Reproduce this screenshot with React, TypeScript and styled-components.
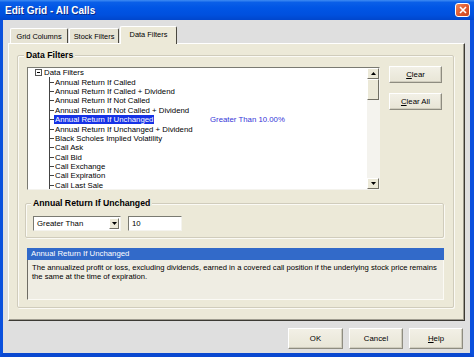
import React from 'react';
import styled, { createGlobalStyle } from 'styled-components';

const GlobalStyle = createGlobalStyle`
  html, body {
    margin: 0;
    padding: 0;
  }
  body {
    width: 474px;
    height: 357px;
    overflow: hidden;
    background: #0046d5;
    font-family: "Liberation Sans", Arial, sans-serif;
    font-size: 7.8px;
    color: #000;
  }
  * { box-sizing: border-box; }
`;

const Window = styled.div`
  width: 474px;
  height: 357px;
  display: flex;
  flex-direction: column;
`;

const TitleBar = styled.div`
  height: 20px;
  flex: none;
  display: flex;
  align-items: center;
  justify-content: space-between;
  padding: 0 4px 0 5px;
  background: linear-gradient(#3f8cf3 0%, #0a5fe8 12%, #0055e5 40%, #0050de 75%, #0046cc 100%);
`;

const Title = styled.div`
  color: #fff;
  font-weight: bold;
  font-size: 10px;
  text-shadow: 1px 1px #0a2a8a;
`;

const CloseButton = styled.div`
  width: 15px;
  height: 14px;
  border: 1px solid #fff;
  border-radius: 3px;
  background: linear-gradient(135deg, #f08a5e 0%, #e05a30 50%, #c8441c 100%);
  display: flex;
  align-items: center;
  justify-content: center;
`;

const Body = styled.div`
  flex: 1;
  display: flex;
  flex-direction: column;
  background: #dfdfdf;
  border-left: 3px solid #0a50dd;
  border-right: 4px solid #0a50dd;
  border-bottom: 4px solid #0a48d0;
  padding: 0 5px;
`;

const TabRow = styled.div`
  display: flex;
  align-items: flex-end;
  height: 23px;
  padding: 6px 0 0 2px;
`;

const Tab = styled.div<{ $w: number; $active?: boolean }>`
  position: relative;
  z-index: ${p => (p.$active ? 1 : 0)};
  width: ${p => p.$w}px;
  height: ${p => (p.$active ? 18 : 15)}px;
  margin-bottom: ${p => (p.$active ? -1 : 0)}px;
  margin-right: ${p => (p.$active ? 0 : 1)}px;
  display: flex;
  align-items: center;
  justify-content: center;
  white-space: nowrap;
  padding-bottom: ${p => (p.$active ? 2 : 0)}px;
  background: ${p => (p.$active ? '#ece9d8' : '#e6e3d4')};
  border-top: 1px solid #fff;
  border-left: 1px solid #fff;
  border-right: 1px solid #4a4840;
  border-radius: 2px 2px 0 0;
  font-size: 7.4px;
`;

const Panel = styled.div`
  height: 278px;
  flex: none;
  display: flex;
  flex-direction: column;
  background: #ece9d8;
  border-top: 1px solid #fff;
  border-left: 1px solid #fff;
  border-right: 1px solid #3c3a34;
  border-bottom: 1px solid #3c3a34;
  box-shadow: inset -1px -1px #a09d90;
`;

const GroupBox = styled.div<{ $ml: number; $mt: number; $mr: number; $pl: number; $pr: number; $pb: number }>`
  margin: ${p => p.$mt}px ${p => p.$mr}px 0 ${p => p.$ml}px;
  padding: 0 ${p => p.$pr}px ${p => p.$pb}px ${p => p.$pl}px;
  border: 1px solid #d0ccbc;
  box-shadow: inset 1px 1px #fbfaf5, 1px 1px #fbfaf5;
  border-radius: 2px;
  display: flex;
  flex-direction: column;
`;

const GroupTitle = styled.div<{ $ml: number }>`
  width: fit-content;
  height: 11px;
  line-height: 11px;
  margin: -6px 0 0 ${p => p.$ml}px;
  padding: 0 2px;
  background: #ece9d8;
  font-weight: bold;
  font-size: 8.7px;
`;

const FilterRow = styled.div`
  display: flex;
  gap: 9px;
  margin-top: 6px;
`;

const TreeBox = styled.div`
  width: 353px;
  height: 123px;
  display: flex;
  background: #fff;
  border-top: 1px solid #7a7a72;
  border-left: 1px solid #7a7a72;
  border-right: 1px solid #f4f3ee;
  border-bottom: 1px solid #f4f3ee;
  overflow: hidden;
`;

const TreeContent = styled.div`
  flex: 1;
  overflow: hidden;
  display: flex;
  flex-direction: column;
`;

const TreeRoot = styled.div`
  height: 9.4px;
  flex: none;
  display: flex;
  align-items: center;
  padding-left: 7px;
`;

const Expander = styled.span`
  width: 7px;
  height: 7px;
  border: 1px solid #555;
  margin-right: 2px;
  position: relative;
  &::after {
    content: '';
    position: absolute;
    left: 1px;
    right: 1px;
    top: 2px;
    height: 1px;
    background: #000;
  }
`;

const TreeItem = styled.div`
  height: 9.4px;
  flex: none;
  display: grid;
  grid-template-columns: 182px 1fr;
  align-items: stretch;
`;

const TreeTail = styled.div`
  flex: 1;
  margin-left: 21px;
  border-left: 1px solid #444;
`;

const ItemCell = styled.div`
  display: flex;
  align-items: stretch;
  padding-left: 21px;
`;

const Connector = styled.span`
  width: 5px;
  flex: none;
  border-left: 1px solid #444;
  background: linear-gradient(#444, #444) left center / 100% 1px no-repeat;
`;

const ItemLabel = styled.span<{ $selected?: boolean }>`
  display: flex;
  align-items: center;
  padding: 0 1px;
  white-space: nowrap;
  background: ${p => (p.$selected ? '#1632e6' : 'transparent')};
  color: ${p => (p.$selected ? '#fff' : '#000')};
`;

const FilterValue = styled.span`
  display: flex;
  align-items: center;
  color: #3535d8;
  white-space: nowrap;
`;

const ScrollBar = styled.div`
  width: 12px;
  flex: none;
  display: flex;
  flex-direction: column;
  background: #f4f3ee;
`;

const ScrollButton = styled.div<{ $h: number }>`
  height: ${p => p.$h}px;
  flex: none;
  background: #ece9d8;
  border-top: 1px solid #fff;
  border-left: 1px solid #fff;
  border-right: 1px solid #716f64;
  border-bottom: 1px solid #716f64;
  display: flex;
  align-items: center;
  justify-content: center;
`;

const ScrollTrack = styled.div`
  flex: 1;
`;

const ButtonColumn = styled.div`
  display: flex;
  flex-direction: column;
  gap: 10px;
  margin-top: -1px;
`;

const Button = styled.button<{ $w: number; $h: number }>`
  width: ${p => p.$w}px;
  height: ${p => p.$h}px;
  padding: 0;
  font-family: inherit;
  font-size: 7.8px;
  color: #000;
  background: linear-gradient(#f2f0e6, #e8e5d6);
  border-top: 1px solid #fff;
  border-left: 1px solid #fff;
  border-right: 1px solid #8e8c80;
  border-bottom: 1px solid #8e8c80;
  box-shadow: inset -1px -1px #cfccbd;
`;

const EditRow = styled.div`
  display: flex;
  gap: 7px;
  margin-top: 7px;
`;

const Combo = styled.div`
  width: 88px;
  height: 15px;
  display: flex;
  align-items: center;
  background: #fff;
  border-top: 1px solid #7a7a72;
  border-left: 1px solid #7a7a72;
  border-right: 1px solid #f4f3ee;
  border-bottom: 1px solid #f4f3ee;
  padding: 1px;
`;

const ComboText = styled.span`
  flex: 1;
  padding-left: 2px;
`;

const ComboArrow = styled.div`
  width: 10px;
  height: 11px;
  background: #ece9d8;
  border-top: 1px solid #fff;
  border-left: 1px solid #fff;
  border-right: 1px solid #716f64;
  border-bottom: 1px solid #716f64;
  display: flex;
  align-items: center;
  justify-content: center;
`;

const TextBox = styled.div`
  width: 54px;
  height: 15px;
  display: flex;
  align-items: center;
  padding-left: 3px;
  background: #fff;
  border-top: 1px solid #7a7a72;
  border-left: 1px solid #7a7a72;
  border-right: 1px solid #f4f3ee;
  border-bottom: 1px solid #f4f3ee;
`;

const Description = styled.div`
  margin-top: 10px;
  height: 52px;
  display: flex;
  flex-direction: column;
`;

const DescHeader = styled.div`
  height: 12px;
  line-height: 12px;
  padding-left: 4px;
  background: #326ac9;
  color: #fff;
`;

const DescBody = styled.div`
  flex: 1;
  padding: 4px 0 0 4px;
  line-height: 8.8px;
  font-size: 7.65px;
  white-space: nowrap;
  overflow: hidden;
  background: #efede3;
  border-left: 1px solid #6e6c64;
  border-bottom: 1px solid #fbfaf5;
  border-right: 1px solid #fbfaf5;
`;

const Footer = styled.div`
  display: flex;
  justify-content: flex-end;
  gap: 6px;
  margin: 7px 2px 0 0;
`;

const Arrow = ({ up }: { up?: boolean }) => (
  <svg width="5" height="3" viewBox="0 0 5 3">
    <path d={up ? 'M2.5 0 L5 3 L0 3 Z' : 'M0 0 L5 0 L2.5 3 Z'} fill="#000" />
  </svg>
);

const items = [
  'Annual Return If Called',
  'Annual Return If Called + Dividend',
  'Annual Return If Not Called',
  'Annual Return If Not Called + Dividend',
  'Annual Return If Unchanged',
  'Annual Return If Unchanged + Dividend',
  'Black Scholes Implied Volatility',
  'Call Ask',
  'Call Bid',
  'Call Exchange',
  'Call Expiration',
  'Call Last Sale',
];

export default function App() {
  return (
    <>
      <GlobalStyle />
      <Window>
        <TitleBar>
          <Title>Edit Grid - All Calls</Title>
          <CloseButton>
            <svg width="8" height="8" viewBox="0 0 8 8">
              <path d="M1 1 L7 7 M7 1 L1 7" stroke="#fff" strokeWidth="1.6" />
            </svg>
          </CloseButton>
        </TitleBar>
        <Body>
          <TabRow>
            <Tab $w={58}>Grid Columns</Tab>
            <Tab $w={50}>Stock Filters</Tab>
            <Tab $w={57} $active>Data Filters</Tab>
          </TabRow>
          <Panel>
            <GroupBox $ml={8} $mt={11} $mr={10} $pl={9} $pr={9} $pb={7}>
              <GroupTitle $ml={-3}>Data Filters</GroupTitle>
              <FilterRow>
                <TreeBox>
                  <TreeContent>
                    <TreeRoot>
                      <Expander />
                      Data Filters
                    </TreeRoot>
                    {items.map(name => (
                      <TreeItem key={name}>
                        <ItemCell>
                          <Connector />
                          <ItemLabel $selected={name === 'Annual Return If Unchanged'}>{name}</ItemLabel>
                        </ItemCell>
                        {name === 'Annual Return If Unchanged' && <FilterValue>Greater Than 10.00%</FilterValue>}
                      </TreeItem>
                    ))}
                    <TreeTail />
                  </TreeContent>
                  <ScrollBar>
                    <ScrollButton $h={11}>
                      <Arrow up />
                    </ScrollButton>
                    <ScrollButton $h={21} />
                    <ScrollTrack />
                    <ScrollButton $h={11}>
                      <Arrow />
                    </ScrollButton>
                  </ScrollBar>
                </TreeBox>
                <ButtonColumn>
                  <Button $w={53} $h={17}>
                    <u>C</u>lear
                  </Button>
                  <Button $w={53} $h={17}>
                    <u>C</u>lear All
                  </Button>
                </ButtonColumn>
              </FilterRow>
              <GroupBox $ml={-2} $mt={13} $mr={0} $pl={7} $pr={7} $pb={6}>
                <GroupTitle $ml={-2}>Annual Return If Unchanged</GroupTitle>
                <EditRow>
                  <Combo>
                    <ComboText>Greater Than</ComboText>
                    <ComboArrow>
                      <Arrow />
                    </ComboArrow>
                  </Combo>
                  <TextBox>10</TextBox>
                </EditRow>
              </GroupBox>
              <Description>
                <DescHeader>Annual Return If Unchanged</DescHeader>
                <DescBody>
                  The annualized profit or loss, excluding dividends, earned in a covered call position if the underlying stock price remains
                  <br />
                  the same at the time of expiration.
                </DescBody>
              </Description>
            </GroupBox>
          </Panel>
          <Footer>
            <Button $w={55} $h={21}>OK</Button>
            <Button $w={54} $h={21}>Cancel</Button>
            <Button $w={54} $h={21}>
              <u>H</u>elp
            </Button>
          </Footer>
        </Body>
      </Window>
    </>
  );
}
